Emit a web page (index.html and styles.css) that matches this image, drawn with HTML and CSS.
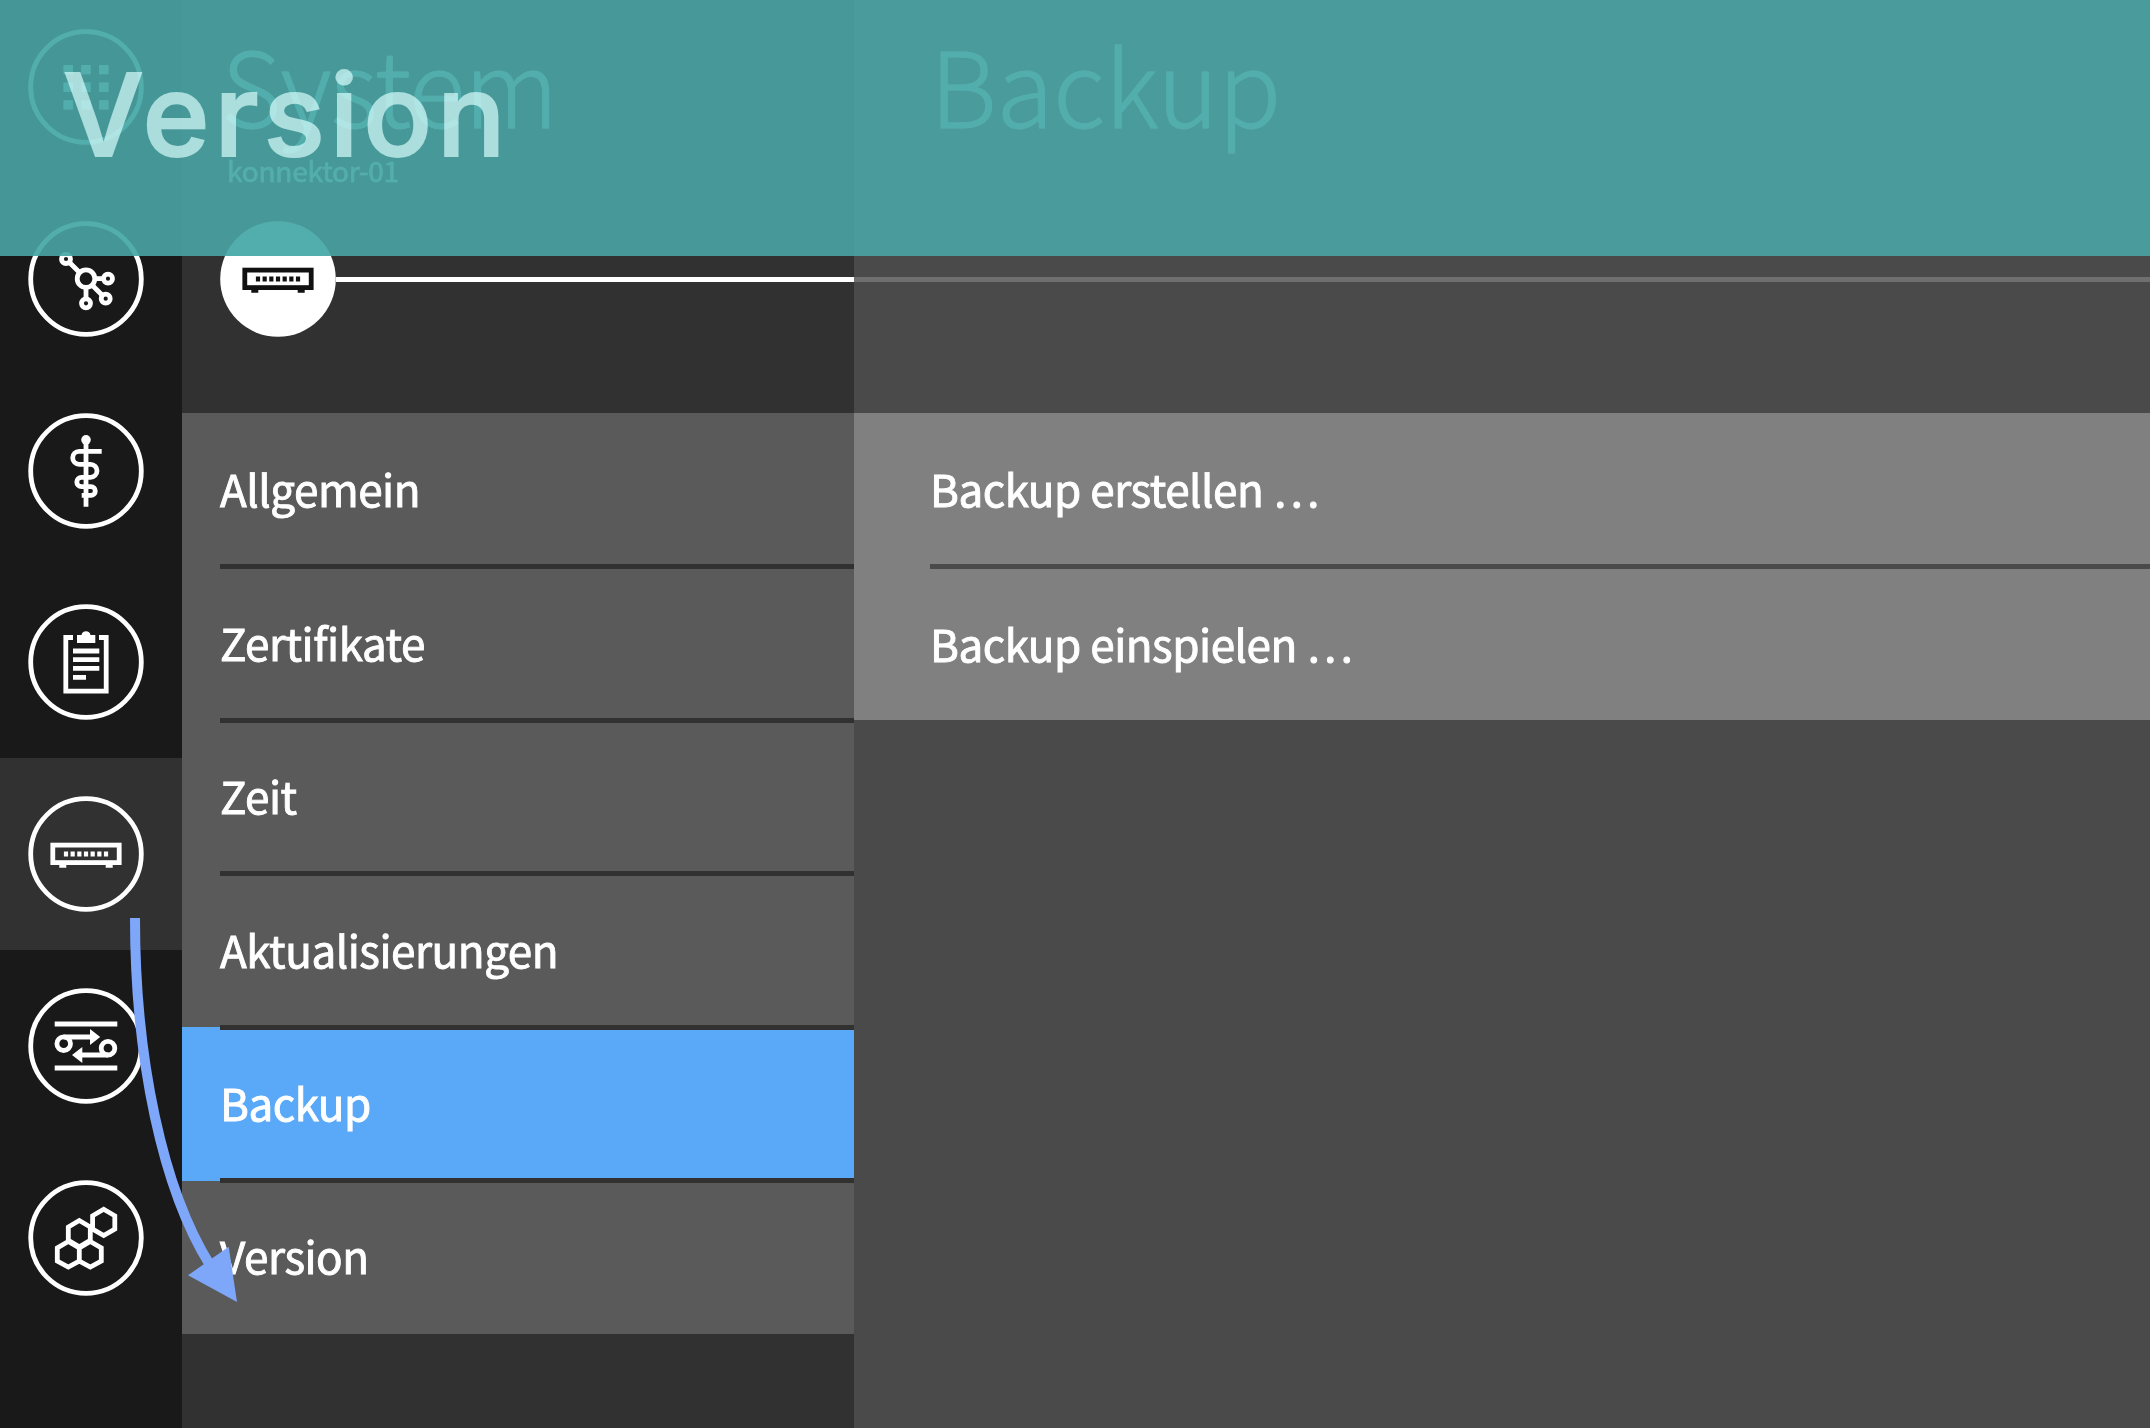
FILE: index.html
```html
<!DOCTYPE html>
<html lang="de">
<head>
<meta charset="utf-8">
<title>Version</title>
<link rel="stylesheet" href="styles.css">
</head>
<body>
<div class="screen">
  <nav class="rail">
    <a class="rail-item"><svg class="icon" viewBox="0 0 116 116"><circle class="ring" cx="58" cy="58" r="55.3"/><path class="solid" d="M35.5 36h9.5v9.3h-9.5zM53.2 36h9.5v9.3h-9.5zM71 36h9.5v9.3h-9.5zM35.5 53.6h9.5v9.3h-9.5zM53.2 53.6h9.5v9.3h-9.5zM71 53.6h9.5v9.3h-9.5zM35.5 71.3h9.5v9.3h-9.5zM53.2 71.3h9.5v9.3h-9.5zM71 71.3h9.5v9.3h-9.5z"/></svg></a>
    <a class="rail-item"><svg class="icon" viewBox="0 0 116 116"><circle class="ring" cx="58" cy="58" r="55.3"/><g class="line"><circle cx="58" cy="57.7" r="8.8"/><circle cx="38" cy="38" r="4.5"/><circle cx="80" cy="57.7" r="4.5"/><circle cx="77.7" cy="77.7" r="4.5"/><circle cx="58" cy="82.3" r="4.5"/><path d="M41.5 41.5l10 10M67 57.7h8.500M64.500 64.500l10 10M58 66.500v11.500"/></g></svg></a>
    <a class="rail-item"><svg class="icon" viewBox="0 0 116 116"><circle class="ring" cx="58" cy="58" r="55.3"/><circle class="solid" cx="58" cy="26.800" r="4.800"/><path class="line" d="M58 27v66.700M73.700 38.300H51.200a6.500 6.500 0 0 0 0 13H62.500a6.500 6.500 0 0 1 0 13H53.500a4.700 4.700 0 0 0 0 9.400H63a4.300 4.300 0 0 1 0 8.600H53.700"/></svg></a>
    <a class="rail-item"><svg class="icon" viewBox="0 0 116 116"><circle class="ring" cx="58" cy="58" r="55.3"/><path class="line" d="M45 33.500H37.800V87.200H78.200V33.500H71M45 47H71.300M45 55.700H71.300M45 64.300H71.300M45 73.300H58"/><path class="solid" d="M49 39V31h4.500a4.600 4.600 0 0 1 9 0h4.800v8z"/></svg></a>
    <a class="rail-item active"><svg class="icon" viewBox="0 0 116 116"><circle class="ring" cx="58" cy="58" r="55.3"/><rect class="line" x="24.800" y="49.100" width="66.400" height="17.500"/><path class="solid" d="M31.300 68h7v3.700h-7zM77.700 68h7v3.700h-7z"/><path class="ports" d="M35.900 58h45"/></svg></a>
    <a class="rail-item"><svg class="icon" viewBox="0 0 116 116"><circle class="ring" cx="58" cy="58" r="55.3"/><path class="line" d="M26.700 36h62.600M26.700 80h62.600M35.700 49H64M80 67H52"/><g class="line"><circle cx="35.700" cy="55.700" r="6.800"/><circle cx="80" cy="60.200" r="6.800"/></g><path class="solid" d="M62 41l10.200 8L62 57zM54.300 59L44 67l10.300 8z"/></svg></a>
    <a class="rail-item"><svg class="icon" viewBox="0 0 116 116"><circle class="ring" cx="58" cy="58" r="55.3"/><path class="line" d="M75.700 29.300l11.100 6.500v13.200l-11.100 6.500l-11.100-6.500v-13.200zM51.300 40.500l11 6.500v13.200l-11 6.500l-11-6.500v-13.200zM40.300 61.500l11 6.300v13.200l-11 6l-11-6v-13.200zM62.300 61.500l11 6.300v13.200l-11 6l-11-6v-13.200z"/></svg></a>
  </nav>

  <section class="column system">
    <header class="head">
      <h2>System</h2>
      <p class="host">konnektor-01</p>
      <div class="track"><svg class="icon device" viewBox="0 0 116 116"><circle class="disc" cx="58" cy="58" r="57.800"/><rect class="line" x="24.800" y="49.100" width="66.400" height="17.500"/><path class="solid" d="M31.300 68h7v3.700h-7zM77.700 68h7v3.700h-7z"/><path class="ports" d="M35.900 58h45"/></svg><span class="bar"></span></div>
    </header>
    <ul class="menu">
      <li>Allgemein</li>
      <li>Zertifikate</li>
      <li>Zeit</li>
      <li>Aktualisierungen</li>
      <li class="selected">Backup</li>
      <li>Version</li>
    </ul>
  </section>

  <section class="column detail">
    <header class="head">
      <h2>Backup</h2>
      <div class="track"><span class="bar"></span></div>
    </header>
    <ul class="menu">
      <li>Backup erstellen …</li>
      <li>Backup einspielen …</li>
    </ul>
  </section>

  <svg class="pointer" viewBox="0 0 120 400"><path class="shaft" d="M15 8C15 150 43 280 90 355"/><path class="tip" d="M108.700 336.700L68 365.300L117 392z"/></svg>
  <div class="banner"></div>
  <div class="banner-tone"></div>
  <h1 class="title">Version</h1>
</div>
</body>
</html>
```
FILE: styles.css
```css
* { box-sizing: border-box; }
body, h1, h2, p, ul { margin: 0; padding: 0; }
body { background: #4a4a4a; }

.screen {
  position: relative;
  display: flex;
  width: 2150px;
  height: 1428px;
  overflow: hidden;
  color: #fff;
  font-family: "Noto Sans CJK SC", "Noto Sans", sans-serif;
}

/* icon rail */
.rail {
  flex: none;
  width: 182px;
  margin-top: -9px;
  background: #191919;
}
.rail-item {
  display: flex;
  align-items: center;
  height: 191.850px;
  padding-left: 28px;
}
.rail-item.active { background: #313131; }
.icon { flex: none; width: 116px; height: 116px; }
.ring, .line { fill: none; stroke: #fff; stroke-width: 4.800; }
.solid { fill: #fff; }
.ports { stroke: #fff; stroke-width: 5; stroke-dasharray: 4.200 2.470; }

/* columns */
.system { flex: none; width: 672px; background: #313131; }
.detail { flex: 1; background: #4a4a4a; }
.head { height: 413px; }
.head h2 {
  padding: 6px 0 7px;
  font-size: 104px;
  line-height: 153px;
  font-weight: 300;
  white-space: nowrap;
  -webkit-text-stroke: .8px #fff;
}
.system .head h2 { padding-left: 39px; letter-spacing: -.800px; }
.detail .head h2 { padding-left: 76px; letter-spacing: -.300px; }
.host {
  height: 55px;
  padding-left: 45px;
  font-size: 28px;
  line-height: 8px;
  letter-spacing: -.200px;
  -webkit-text-stroke: .500px #fff;
}
.track { display: flex; align-items: center; height: 116px; }
.bar { flex: 1; height: 5px; background: #fff; }
.system .track { padding-left: 38px; }
.detail .track { margin-top: 55px; }
.detail .bar { background: #6f6f6f; }
.disc { fill: #fff; }
.device .line, .device .ports { stroke: #111; }
.device .solid { fill: #111; }

.menu {
  list-style: none;
  background: #5a5a5a;
  font-size: 44px;
  font-weight: 400;
  letter-spacing: -.480px;
  -webkit-text-stroke: .900px #fff;
}
.menu li {
  position: relative;
  height: 153.500px;
  padding-left: 38px;
  line-height: 151px;
}
.menu li:last-child { line-height: 149px; }
.menu li + li::before {
  content: "";
  position: absolute;
  top: -2.500px;
  left: 38px;
  right: 0;
  height: 5px;
  background: #313131;
}
.menu .selected { background: #5aa8f8; }
.detail .menu { background: #808080; }
.detail .menu li { padding-left: 76px; }
.detail .menu li + li { line-height: 153px; }
.detail .menu li + li::before { left: 76px; background: #4a4a4a; }

/* overlays */
.pointer { position: absolute; left: 120px; top: 910px; width: 120px; height: 400px; }
.shaft { fill: none; stroke: #7ea6f9; stroke-width: 10; }
.tip { fill: #7ea6f9; }
.banner, .banner-tone { position: absolute; left: 0; top: 0; width: 100%; height: 256px; }
.banner { background: rgba(73, 165, 164, .9); }
.banner-tone { background: #52ffff; mix-blend-mode: darken; }
.title {
  position: absolute;
  left: 63px;
  top: 45px;
  font: 500 114px/139px Inter, "Noto Sans", sans-serif;
  letter-spacing: 4.900px;
  color: #dbfffe;
  -webkit-text-stroke: 2px #dbfffe;
  opacity: .68;
}
```
